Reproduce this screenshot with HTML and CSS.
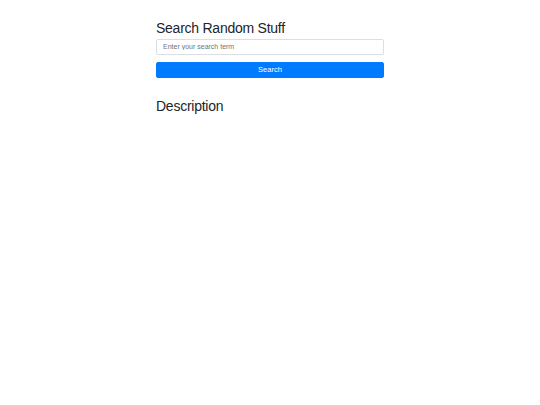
FILE: index.html
```html
<!DOCTYPE html>
<html>
<head>
<meta charset="utf-8">
<link rel="stylesheet" href="styles.css">
</head>
<body>
<div class="container">
  <h3 class="title">Search Random Stuff</h3>
  <form class="search-form">
    <input class="search-input" type="text" placeholder="Enter your search term">
    <button class="search-btn" type="button">Search</button>
  </form>
  <h3 class="title desc">Description</h3>
</div>
</body>
</html>
```
FILE: styles.css
```css
html, body {
  margin: 0;
  padding: 0;
  background: #fff;
}
body {
  font-family: "Liberation Sans", Arial, sans-serif;
  color: #212529;
}
.container {
  width: 228px;
  margin: 0 auto;
  padding-top: 20px;
}
.title {
  margin: 0;
  font-size: 14px;
  letter-spacing: -0.25px;
  font-weight: 400;
  line-height: 1.2;
}
.search-form {
  display: flex;
  flex-direction: column;
  gap: 7px;
  margin-top: 2px;
}
.search-input {
  box-sizing: border-box;
  height: 16px;
  width: 100%;
  margin: 0;
  padding: 0 6px;
  border: 1px solid #dadfe4;
  border-radius: 2px;
  font-family: inherit;
  font-size: 7px;
  color: #495057;
  outline: none;
}
.search-input::placeholder {
  color: #6c757d;
}
.search-btn {
  box-sizing: border-box;
  height: 16px;
  width: 100%;
  margin: 0;
  padding: 0;
  border: 1px solid #007bff;
  border-radius: 2px;
  background: #007bff;
  color: #fff;
  font-family: inherit;
  font-size: 7.5px;
}
.desc {
  margin-top: 20px;
}
```
